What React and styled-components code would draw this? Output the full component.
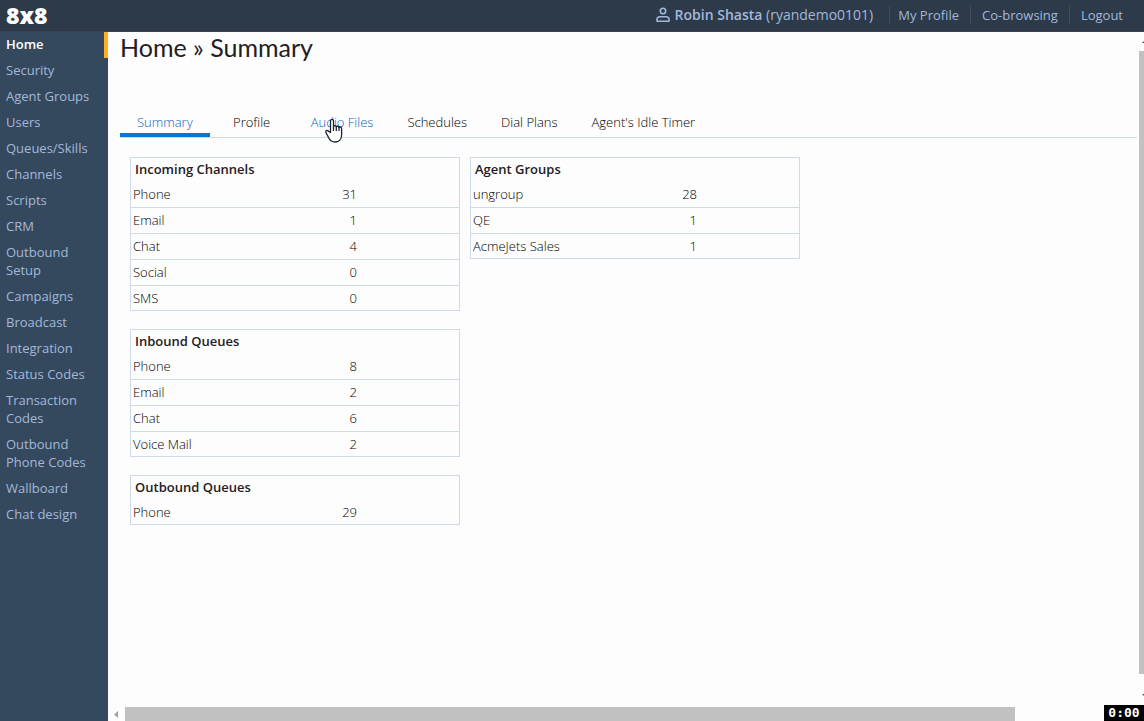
import React, { useState } from "react";
import styled, { createGlobalStyle } from "styled-components";

const GlobalStyle = createGlobalStyle`
  :root {
    --header: #2c3a4a;
    --sidebar: #34495e;
    --link: #a3b8d9;
    --line: #cfd9e8;
    --blue: #0077d9;
    --ink: #1f2024;
    --page: #fdfdfd;
  }

  * {
    box-sizing: border-box;
  }

  body {
    margin: 0;
    background: var(--page);
    color: var(--ink);
    font-family: "Open Sans", "Noto Sans", sans-serif;
    font-size: 13px;
    line-height: 18px;
  }
`;

const Page = styled.div`
  display: flex;
  flex-direction: column;
  height: 100vh;
  overflow: hidden;
`;

const Header = styled.header`
  display: flex;
  align-items: center;
  justify-content: space-between;
  flex: none;
  height: 32px;
  padding: 0 10px 2px 6px;
  background: var(--header);
  border-bottom: 1px solid #3f4152;
  color: var(--link);
`;

const Logo = styled.a`
  color: #fff;
  font-size: 23px;
  font-weight: 800;
  line-height: 30px;
  text-decoration: none;
`;

const UserNav = styled.nav`
  display: flex;
  align-items: center;
`;

const UserName = styled.span`
  display: flex;
  align-items: center;
  gap: 5px;
  margin-right: 16px;
  font-size: 14px;
  white-space: pre;

  b {
    font-weight: 600;
  }
`;

const UserLink = styled.a`
  padding: 0 11px 0 8px;
  border-left: 1px solid #454b5a;
  color: inherit;
  line-height: 18px;
  text-decoration: none;

  & + & {
    padding-left: 11px;
  }
`;

const Body = styled.div`
  display: flex;
  flex: 1;
  min-height: 0;
`;

const Sidebar = styled.nav`
  flex: none;
  width: 108px;
  background: var(--sidebar);
`;

const SideLink = styled.a`
  display: block;
  padding: 3px 8px 5px 6px;
  border-right: 4px solid ${(props) => (props.$active ? "#ffb020" : "transparent")};
  color: ${(props) => (props.$active ? "#fff" : "var(--link)")};
  font-weight: ${(props) => (props.$active ? 600 : 500)};
  text-decoration: none;
`;

const Frame = styled.div`
  display: grid;
  flex: 1;
  grid-template-columns: 1fr 7px;
  grid-template-rows: 1fr 14px;
  min-width: 0;
`;

const Content = styled.main`
  min-width: 0;
  padding-left: 12px;
  overflow: hidden;
`;

const Title = styled.h1`
  margin: 0;
  font-family: Lato, sans-serif;
  font-size: 25px;
  font-weight: 400;
  line-height: 30px;
`;

const Tabs = styled.div`
  display: flex;
  margin-top: 44px;
  border-bottom: 1px solid var(--line);
`;

const Tab = styled.button`
  min-width: 84px;
  height: 31px;
  padding: 4px 17px 0;
  background: none;
  border: 0;
  border-bottom: 4px solid ${(props) => (props.$active ? "var(--blue)" : "transparent")};
  color: ${(props) => (props.$active ? "#0f5fc4" : "#000")};
  font: inherit;
  font-weight: 300;
  cursor: pointer;

  &:hover {
    color: #0f5fc4;
  }
`;

const HoverTab = styled(Tab)`
  position: relative;
  color: #0f5fc4;
`;

const Pointer = styled.svg`
  position: absolute;
  top: 12px;
  left: 31px;
`;

const Columns = styled.div`
  display: flex;
  align-items: flex-start;
  gap: 10px;
  padding: 19px 10px;
`;

const Column = styled.div`
  display: flex;
  flex-direction: column;
  gap: 18px;
  width: 330px;
`;

const Panel = styled.section`
  border: 1px solid var(--line);
`;

const Table = styled.table`
  width: 100%;
  border-spacing: 0;

  caption {
    height: 24px;
    padding: 2px 4px;
    font-weight: 600;
    text-align: left;
  }

  th,
  td {
    height: 26px;
    padding: 0 2px 1px;
    border-bottom: 1px solid var(--line);
    color: #000;
    font-weight: 300;
    text-align: left;
  }

  td {
    padding-right: 102px;
    text-align: right;
  }

  tr:last-child > * {
    height: 24px;
    padding-bottom: 0;
    border-bottom: 0;
  }
`;

const VerticalBar = styled.div`
  display: flex;
  flex-direction: column;
  align-items: flex-end;
  justify-content: space-between;
  padding: 9px 0 10px;
  overflow: hidden;
`;

const VerticalThumb = styled.div`
  flex: 1;
  width: 5px;
  margin: 7px 0 20px;
  background: #c1c1c1;
`;

const HorizontalBar = styled.div`
  display: flex;
  align-items: center;
  grid-column: 1 / -1;
  gap: 7px;
  padding: 0 129px 0 6px;
`;

const HorizontalThumb = styled.div`
  flex: 1;
  height: 14px;
  background: #c1c1c1;
`;

const Timer = styled.time`
  position: fixed;
  right: 0;
  bottom: 0;
  width: 40px;
  height: 16px;
  background: #000;
  color: #fff;
  font: 700 13px/16px "DejaVu Sans Mono", monospace;
  text-align: center;
`;

const menu = [
  "Home",
  "Security",
  "Agent Groups",
  "Users",
  "Queues/Skills",
  "Channels",
  "Scripts",
  "CRM",
  "Outbound Setup",
  "Campaigns",
  "Broadcast",
  "Integration",
  "Status Codes",
  "Transaction Codes",
  "Outbound Phone Codes",
  "Wallboard",
  "Chat design",
];

const tabs = ["Summary", "Profile", "Audio Files", "Schedules", "Dial Plans", "Agent's Idle Timer"];

const incoming = [["Phone", 31], ["Email", 1], ["Chat", 4], ["Social", 0], ["SMS", 0]];
const inbound = [["Phone", 8], ["Email", 2], ["Chat", 6], ["Voice Mail", 2]];
const outbound = [["Phone", 29]];
const groups = [["ungroup", 28], ["QE", 1], ["AcmeJets Sales", 1]];

const UserIcon = () => (
  <svg width="14" height="16" viewBox="0 0 14 16" fill="none" stroke="currentColor" strokeWidth="1.6">
    <circle cx="7" cy="4" r="2.7" />
    <path d="M1 14.2v-1.6c0-1.7 1.2-2.8 2.8-2.8h6.4c1.6 0 2.8 1.1 2.8 2.8v1.6z" strokeLinejoin="round" />
  </svg>
);

const HandPointer = () => (
  <Pointer width="18" height="26" viewBox="0 0 18 26" fill="#fff" stroke="#1f2233" strokeWidth="1.3" strokeLinejoin="round" strokeLinecap="round" aria-hidden="true">
    <path d="M5.5 14.5V3c0-2.2 3-2.2 3 0v5.6c.2-1.3 2.6-1.2 2.8.3.3-1 2.4-.9 2.7.5.5-.8 2.6-.4 2.6 1.3v6.1c0 4.3-2.6 7.2-6.6 7.2-3.2 0-4.9-1.3-6.2-4L1 14.6c-.8-1.8 1.2-2.8 2.4-1.5z" />
    <path d="M8.5 8.5v4M11.3 9v3.5M14 9.5v3" fill="none" />
  </Pointer>
);

const SummaryTable = ({ title, rows }) => (
  <Panel>
    <Table>
      <caption>{title}</caption>
      <tbody>
        {rows.map(([name, count]) => (
          <tr key={name}>
            <th scope="row">{name}</th>
            <td>{count}</td>
          </tr>
        ))}
      </tbody>
    </Table>
  </Panel>
);

const App = () => {
  const [activeTab, setActiveTab] = useState("Summary");

  return (
    <Page>
      <GlobalStyle />
      <Header>
        <Logo href="#home">8x8</Logo>
        <UserNav>
          <UserName>
            <UserIcon />
            <span><b>Robin Shasta</b> (ryandemo0101)</span>
          </UserName>
          <UserLink href="#profile">My Profile</UserLink>
          <UserLink href="#cobrowsing">Co-browsing</UserLink>
          <UserLink href="#logout">Logout</UserLink>
        </UserNav>
      </Header>
      <Body>
        <Sidebar>
          {menu.map((item) => (
            <SideLink key={item} href="#" $active={item === "Home"}>{item}</SideLink>
          ))}
        </Sidebar>
        <Frame>
          <Content>
            <Title>Home » Summary</Title>
            <Tabs>
              {tabs.map((tab) => {
                const hovered = tab === "Audio Files";
                const TabButton = hovered ? HoverTab : Tab;
                return (
                  <TabButton key={tab} type="button" $active={tab === activeTab} onClick={() => setActiveTab(tab)}>
                    {tab}
                    {hovered && <HandPointer />}
                  </TabButton>
                );
              })}
            </Tabs>
            <Columns>
              <Column>
                <SummaryTable title="Incoming Channels" rows={incoming} />
                <SummaryTable title="Inbound Queues" rows={inbound} />
                <SummaryTable title="Outbound Queues" rows={outbound} />
              </Column>
              <Column>
                <SummaryTable title="Agent Groups" rows={groups} />
              </Column>
            </Columns>
          </Content>
          <VerticalBar>
            <svg width="2" height="3" viewBox="0 0 2 3"><path d="M2 0v2H0z" fill="#505050" /></svg>
            <VerticalThumb />
            <svg width="2" height="3" viewBox="0 0 2 3"><path d="M0 0h2v2z" fill="#505050" /></svg>
          </VerticalBar>
          <HorizontalBar>
            <svg width="4" height="7" viewBox="0 0 4 7"><path d="M4 0v7L0 3.5z" fill="#a3a3a3" /></svg>
            <HorizontalThumb />
          </HorizontalBar>
        </Frame>
      </Body>
      <Timer>0:00</Timer>
    </Page>
  );
};

export default App;
